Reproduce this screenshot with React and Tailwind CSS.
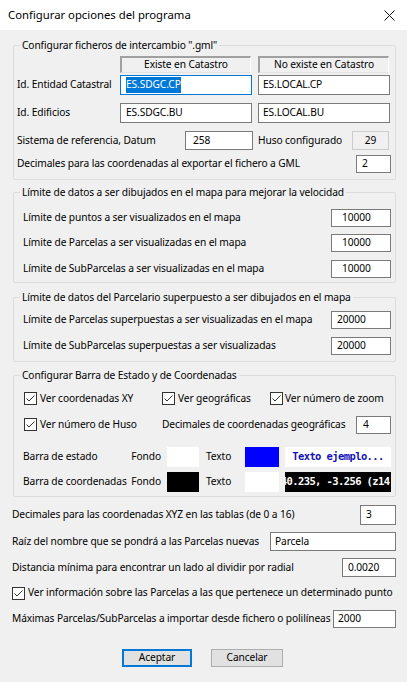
import React from "react";

function Box({ className = "", children }) {
  return (
    <div
      className={`flex items-center shrink-0 bg-white border border-[#7a7a7a] whitespace-nowrap overflow-hidden ${className}`}
    >
      {children}
    </div>
  );
}

function Check() {
  return (
    <span className="flex items-center justify-center w-[13px] h-[13px] shrink-0 bg-white border border-[#333333]">
      <svg width="11" height="11" viewBox="0 0 11 11">
        <path d="M1.5 5.5 L4 8 L9.5 2.5" fill="none" stroke="#333333" strokeWidth="1" />
      </svg>
    </span>
  );
}

function Group({ title, className = "", children }) {
  return (
    <fieldset className={`ml-[13px] w-[383px] border border-[#dcdcdc] rounded-[2px] ${className}`}>
      <legend className="ml-[6px] px-[2px] h-[14px] leading-[14px]">{title}</legend>
      {children}
    </fieldset>
  );
}

const limites = [
  ["Límite de puntos a ser visualizados en el mapa", "10000", "mt-[10px]", "pl-[10px]"],
  ["Límite de Parcelas a ser visualizadas en el mapa", "10000", "mt-[7px]", "pl-[10px]"],
  ["Límite de SubParcelas a ser visualizadas en el mapa", "10000", "mt-[8px]", "pl-[10px]"],
];

const superpuestas = [
  ["Límite de Parcelas superpuestas a ser visualizadas en el mapa", "20000", "mt-[7px]"],
  ["Límite de SubParcelas superpuestas a ser visualizadas", "20000", "mt-[8px]"],
];

export default function App() {
  return (
    <div className="w-[407px] h-[682px] bg-[#f0f0f0] text-[10.2px] tracking-[-0.1px] text-black font-['Noto_Sans',sans-serif] overflow-hidden">
      {/* barra de título */}
      <div className="flex items-center justify-between h-[30px] bg-white pl-[8px] pr-[12px]">
        <span className="text-[11.3px] tracking-normal">Configurar opciones del programa</span>
        <svg width="11" height="11" viewBox="0 0 11 11">
          <path d="M0.5 0.5 L10.5 10.5 M10.5 0.5 L0.5 10.5" stroke="#111" strokeWidth="1" />
        </svg>
      </div>

      <Group title='Configurar ficheros de intercambio ".gml"' className="mt-[8px] pb-[6px]">
        <div className="flex mt-[4px] ml-[106px] gap-[7px]">
          {["Existe en Catastro", "No existe en Catastro"].map((t) => (
            <div
              key={t}
              className="flex items-center justify-center w-[131px] h-[17px] border-t-2 border-l-2 border-r border-b border-t-[#a0a0a0] border-l-[#a0a0a0] border-r-white border-b-[#e3e3e3]"
            >
              {t}
            </div>
          ))}
        </div>
        <div className="flex items-center h-[20px] mt-[2px]">
          <span className="w-[106px] pl-[3px] whitespace-nowrap">Id. Entidad Catastral</span>
          <Box className="w-[132px] h-[20px] pl-[5px] border-[#0078d7]">
            <span className="bg-[#0078d7] text-white">ES.SDGC.CP</span>
          </Box>
          <Box className="w-[132px] h-[20px] ml-[6px] pl-[4px]">ES.LOCAL.CP</Box>
        </div>
        <div className="flex items-center h-[20px] mt-[8px]">
          <span className="w-[106px] pl-[3px] whitespace-nowrap">Id. Edificios</span>
          <Box className="w-[132px] h-[20px] pl-[5px]">ES.SDGC.BU</Box>
          <Box className="w-[132px] h-[20px] ml-[6px] pl-[4px]">ES.LOCAL.BU</Box>
        </div>
        <div className="flex items-center h-[19px] mt-[8px]">
          <span className="w-[171px] pl-[3px] whitespace-nowrap">Sistema de referencia, Datum</span>
          <Box className="w-[68px] h-[19px] pl-[7px]">258</Box>
          <span className="w-[94px] ml-[5px] whitespace-nowrap">Huso configurado</span>
          <div className="flex items-center justify-center w-[37px] h-[19px] border border-[#cccccc]">29</div>
        </div>
        <div className="flex items-center justify-between h-[18px] mt-[5px] pl-[3px] pr-[4px]">
          <span className="whitespace-nowrap">Decimales para las coordenadas al exportar el fichero a GML</span>
          <Box className="w-[35px] h-[18px] pl-[5px]">2</Box>
        </div>
      </Group>

      <Group title="Límite de datos a ser dibujados en el mapa para mejorar la velocidad" className="mt-[5px] pb-[4px]">
        {limites.map(([label, value, mt, pad]) => (
          <div key={label} className={`flex items-center justify-between h-[18px] pl-[9px] pr-[4px] ${mt}`}>
            <span className="whitespace-nowrap">{label}</span>
            <Box className={`w-[60px] h-[18px] ${pad}`}>{value}</Box>
          </div>
        ))}
      </Group>

      <Group title="Límite de datos del Parcelario superpuesto a ser dibujados en el mapa" className="mt-[7px] pb-[6px]">
        {superpuestas.map(([label, value, mt]) => (
          <div key={label} className={`flex items-center justify-between h-[18px] pl-[9px] pr-[4px] ${mt}`}>
            <span className="whitespace-nowrap">{label}</span>
            <Box className="w-[60px] h-[18px] pl-[5px]">{value}</Box>
          </div>
        ))}
      </Group>

      <Group title="Configurar Barra de Estado y de Coordenadas" className="mt-[6px] pb-[4px]">
        <div className="flex items-center h-[17px] mt-[8px] pl-[10px]">
          <div className="flex items-center gap-[3px] w-[138px]">
            <Check />
            <span className="whitespace-nowrap">Ver coordenadas XY</span>
          </div>
          <div className="flex items-center gap-[3px] w-[108px]">
            <Check />
            <span className="whitespace-nowrap">Ver geográficas</span>
          </div>
          <div className="flex items-center gap-[2px]">
            <Check />
            <span className="whitespace-nowrap">Ver número de zoom</span>
          </div>
        </div>
        <div className="flex items-center h-[18px] mt-[9px] pl-[10px] pr-[4px]">
          <div className="flex items-center gap-[3px] w-[138px]">
            <Check />
            <span className="whitespace-nowrap">Ver número de Huso</span>
          </div>
          <span className="flex-1 whitespace-nowrap">Decimales de coordenadas geográficas</span>
          <Box className="w-[35px] h-[18px] pl-[6px]">4</Box>
        </div>
        <div className="flex items-center h-[20px] mt-[13px] pl-[9px]">
          <span className="w-[106px] whitespace-nowrap overflow-hidden">Barra de estado</span>
          <span className="w-[32px] text-right">Fondo</span>
          <div className="w-[32px] h-[20px] ml-[6px] bg-white" />
          <span className="w-[39px] ml-[7px]">Texto</span>
          <div className="w-[34px] h-[20px] bg-[#0000ff]" />
          <div className="flex items-center justify-center w-[106px] h-[20px] ml-[6px] bg-white overflow-hidden whitespace-nowrap font-['DejaVu_Sans_Mono',monospace] font-bold text-[10.5px] tracking-[-0.6px] text-[#1414b4]">
            Texto ejemplo...
          </div>
        </div>
        <div className="flex items-center h-[20px] mt-[5px] pl-[9px]">
          <span className="w-[106px] whitespace-nowrap overflow-hidden">Barra de coordenadas</span>
          <span className="w-[32px] text-right">Fondo</span>
          <div className="w-[32px] h-[20px] ml-[6px] bg-black" />
          <span className="w-[39px] ml-[7px]">Texto</span>
          <div className="w-[34px] h-[20px] bg-white" />
          <div className="flex items-center justify-center w-[106px] h-[20px] ml-[6px] bg-black overflow-hidden whitespace-nowrap font-['DejaVu_Sans_Mono',monospace] font-bold text-[10.5px] tracking-[-0.6px] text-white">
            40.235, -3.256 (z14)
          </div>
        </div>
      </Group>

      <div className="pl-[12px] pr-[11px]">
        <div className="flex items-center justify-between h-[20px] mt-[8px]">
          <span className="whitespace-nowrap">Decimales para las coordenadas XYZ en las tablas (de 0 a 16)</span>
          <Box className="w-[36px] h-[20px] pl-[5px]">3</Box>
        </div>
        <div className="flex items-center justify-between h-[19px] mt-[7px]">
          <span className="whitespace-nowrap">Raíz del nombre que se pondrá a las Parcelas nuevas</span>
          <Box className="w-[126px] h-[19px] pl-[4px]">Parcela</Box>
        </div>
        <div className="flex items-center justify-between h-[19px] mt-[7px]">
          <span className="whitespace-nowrap">Distancia mínima para encontrar un lado al dividir por radial</span>
          <Box className="w-[54px] h-[19px] pl-[5px]">0.0020</Box>
        </div>
        <div className="flex items-center gap-[3px] h-[16px] mt-[8px] overflow-hidden whitespace-nowrap">
          <Check />
          <span>Ver información sobre las Parcelas a las que pertenece un determinado punto</span>
        </div>
        <div className="flex items-center justify-between h-[18px] mt-[9px]">
          <span className="whitespace-nowrap">Máximas Parcelas/SubParcelas a importar desde fichero o polilíneas</span>
          <Box className="w-[63px] h-[18px] pl-[4px]">2000</Box>
        </div>
      </div>

      <div className="flex mt-[21px] pl-[122px] gap-[19px]">
        <button className="w-[70px] h-[18px] flex items-center justify-center bg-[#e1e1e1] border-2 border-[#0078d7]">
          Aceptar
        </button>
        <button className="w-[72px] h-[18px] flex items-center justify-center bg-[#e1e1e1] border border-[#adadad]">
          Cancelar
        </button>
      </div>
    </div>
  );
}
